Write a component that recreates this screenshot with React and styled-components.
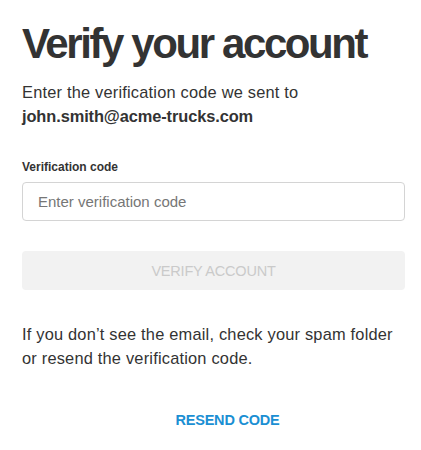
import React from "react";
import styled, { createGlobalStyle } from "styled-components";

const Global = createGlobalStyle`
  html, body { margin: 0; padding: 0; background: #fff; }
  body { font-family: "Liberation Sans", Arial, sans-serif; color: #333; }
  * { box-sizing: border-box; }
`;

const Page = styled.main`
  width: 421px;
  padding: 18px 16px 0 22px;
  display: flex;
  flex-direction: column;
`;

const Title = styled.h1`
  margin: 0;
  font-size: 42px;
  line-height: 52px;
  font-weight: 700;
  letter-spacing: -2.4px;
  white-space: nowrap;
  color: #333;
`;

const Intro = styled.p`
  margin: 10px 0 0;
  font-size: 16.4px;
  line-height: 24px;
  letter-spacing: 0.2px;
  color: #333;
`;

const Email = styled.strong`
  display: block;
  font-weight: 700;
  letter-spacing: -0.1px;
`;

const Field = styled.div`
  margin-top: 32px;
  display: flex;
  flex-direction: column;
  gap: 8px;
`;

const Label = styled.label`
  font-size: 12px;
  line-height: 14px;
  font-weight: 700;
  color: #333;
`;

const Input = styled.input`
  height: 39px;
  width: 100%;
  border: 1px solid #d4d4d4;
  border-radius: 4px;
  padding: 0 15px;
  font-family: inherit;
  font-size: 15px;
  color: #333;
  outline: none;
  &::placeholder { color: #767676; }
`;

const Button = styled.button`
  margin-top: 30px;
  height: 39px;
  width: 100%;
  border: none;
  border-radius: 4px;
  background: #f2f2f2;
  color: #cacaca;
  font-family: inherit;
  font-size: 14.5px;
  letter-spacing: -0.2px;
  text-transform: uppercase;
  cursor: default;
`;

const Hint = styled.p`
  margin: 32px 0 0;
  max-width: 372px;
  font-size: 16.4px;
  line-height: 24px;
  letter-spacing: 0.2px;
  color: #333;
`;

const LinkRow = styled.div`
  margin-top: 42px;
  display: flex;
  justify-content: center;
  padding-left: 28px;
`;

const Link = styled.a`
  font-size: 14.5px;
  font-weight: 700;
  color: #1b8fd3;
  text-decoration: none;
  letter-spacing: -0.2px;
  text-transform: uppercase;
`;

export default function App() {
  return (
    <>
      <Global />
      <Page>
        <Title>Verify your account</Title>
        <Intro>
          Enter the verification code we sent to
          <Email>john.smith@acme-trucks.com</Email>
        </Intro>
        <Field>
          <Label htmlFor="code">Verification code</Label>
          <Input id="code" placeholder="Enter verification code" />
        </Field>
        <Button disabled>Verify account</Button>
        <Hint>
          If you don’t see the email, check your spam folder or resend the verification code.
        </Hint>
        <LinkRow>
          <Link href="#">Resend code</Link>
        </LinkRow>
      </Page>
    </>
  );
}
